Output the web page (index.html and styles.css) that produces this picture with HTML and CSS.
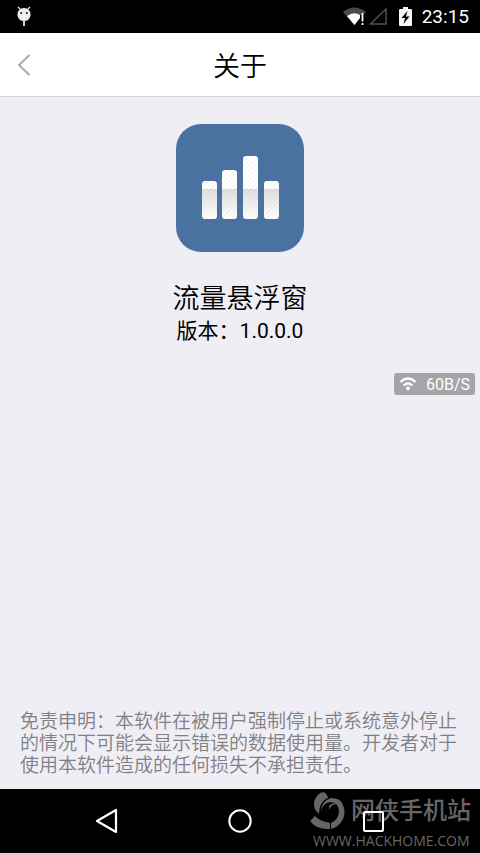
FILE: index.html
```html
<!DOCTYPE html>
<html lang="zh-CN">
<head>
<meta charset="utf-8">
<meta name="viewport" content="width=device-width, initial-scale=1">
<title>关于</title>
<link rel="stylesheet" href="styles.css">
</head>
<body>
<div class="status">
  <svg class="debug" width="16" height="22" viewBox="0 0 16 22" aria-hidden="true">
    <path d="M2 1l3 3M14 1l-3 3" stroke="#eee" stroke-width="1.2"/>
    <circle cx="8" cy="8.5" r="6.6" fill="#eee"/>
    <path d="M8 15v5" stroke="#eee" stroke-width="1.8"/>
    <circle cx="5.2" cy="7" r="1" fill="#111"/><circle cx="10.800" cy="7" r="1" fill="#111"/>
  </svg>
  <div class="indicators">
    <svg width="24" height="20" viewBox="0 0 24 20" aria-hidden="true">
      <path d="M1 5Q12-4 24 5L21 8H17V11L12 18Z" fill="#4b4b4b"/>
      <path d="M5 9Q12 4 18 8V11L12.500 18Z" fill="#fff"/>
      <path d="M20.500 6v8.500M20.500 16v2" stroke="#fff" stroke-width="1.800"/>
    </svg>
    <svg class="cell" width="19" height="20" viewBox="0 0 19 20" aria-hidden="true">
      <path d="M2.500 17H18V2Z" fill="none" stroke="#505050" stroke-width="1.500"/>
    </svg>
    <svg class="battery" width="13" height="20" viewBox="0 0 13 20" aria-hidden="true">
      <path d="M4 0h5v2h3q1 0 1 1v15q0 1-1 1H1q-1 0-1-1V3q0-1 1-1h3z" fill="#f4f4f4"/>
      <path d="M8.500 4L2.500 11H6L4.500 17L10.500 9.500H7z" fill="#000"/>
    </svg>
    <time>23:15</time>
  </div>
</div>
<header class="titlebar">
  <button class="back" aria-label="返回">
    <svg width="14" height="22" viewBox="0 0 14 22" aria-hidden="true"><path d="M12.500 1L2 11L12.500 21" fill="none" stroke="#aaa" stroke-width="2"/></svg>
  </button>
  <h1>关于</h1>
</header>
<main>
  <svg class="logo" width="128" height="128" viewBox="0 0 128 128" aria-hidden="true">
    <defs>
      <pattern id="hatch" width="5" height="5" patternUnits="userSpaceOnUse">
        <path d="M-1 6L6-1M-1 1L1-1M4 6L6 4" stroke="#888" stroke-opacity=".12" stroke-width="1"/>
      </pattern>
      <linearGradient id="shade" x1="0" y1="65" x2="0" y2="95" gradientUnits="userSpaceOnUse">
        <stop offset="0" stop-color="#dedede"/><stop offset="1" stop-color="#fff"/>
      </linearGradient>
      <clipPath id="bars">
        <rect x="26" y="57" width="15" height="38" rx="3"/><rect x="46" y="46" width="15" height="49" rx="3"/>
        <rect x="67" y="32" width="15" height="63" rx="3"/><rect x="88" y="57" width="15" height="38" rx="3"/>
      </clipPath>
    </defs>
    <rect width="128" height="128" rx="25" fill="#4a72a1"/>
    <g clip-path="url(#bars)">
      <path fill="#fff" d="M20 25h90v40H20z"/>
      <path fill="url(#shade)" d="M20 65h90v30H20z"/>
      <path fill="url(#hatch)" d="M20 25h90v70H20z"/>
    </g>
  </svg>
  <h2>流量悬浮窗</h2>
  <p class="version">版本：1.0.0.0</p>
  <p class="disclaimer">免责申明：本软件在被用户强制停止或系统意外停止的情况下可能会显示错误的数据使用量。开发者对于使用本软件造成的任何损失不承担责任。</p>
  <div class="speed">
    <svg width="18" height="14" viewBox="0 0 18 14" aria-hidden="true">
      <path d="M1.500 5Q9-2 16.500 5M4.500 8.500Q9 4.500 13.500 8.500" fill="none" stroke="#fff" stroke-width="2.300"/>
      <circle cx="9" cy="11.500" r="1.900" fill="#fff"/>
    </svg>
    <span>60B/S</span>
  </div>
</main>
<nav class="navbar">
  <button aria-label="后退"><svg width="26" height="26" viewBox="0 0 26 26" aria-hidden="true"><path d="M22 2V24L3 13Z" fill="none" stroke="#fff" stroke-width="2.200" stroke-linejoin="round"/></svg></button>
  <button aria-label="主页"><svg width="26" height="26" viewBox="0 0 26 26" aria-hidden="true"><circle cx="13" cy="13" r="10.700" fill="none" stroke="#fff" stroke-width="2"/></svg></button>
  <button aria-label="最近任务"><svg width="26" height="26" viewBox="0 0 26 26" aria-hidden="true"><rect x="4" y="4" width="19" height="19" rx="1" fill="none" stroke="#fff" stroke-width="2"/></svg></button>
  <div class="watermark">
    <div class="brand">
      <svg width="36" height="38" viewBox="0 0 36 38" aria-hidden="true">
        <g fill="#666">
          <path d="M12 0L17 6Q9 11 9 22Q3 17 4 10Q6 3 12 0Z"/>
          <path d="M13 0Q17 1 18 6L13 8Z"/>
          <path d="M5 24Q9 29 20 31V37Q7 38 0 29Z"/>
          <path d="M21 37V31Q28 28 29 20Q29 11 21 10Q13 10 11 20Q11 9 21 6Q31 6 33 13Q36 20 33 27Q29 35 21 37Z"/>
          <path d="M19 14Q22 10 27 12Q21 12 19 18Z"/>
        </g>
      </svg>
      <span>网侠手机站</span>
    </div>
    <div class="site">WWW.HACKHOME.COM</div>
  </div>
</nav>
</body>
</html>
```
FILE: styles.css
```css
* { box-sizing: border-box; }

body {
  margin: 0;
  min-height: 100vh;
  display: flex;
  flex-direction: column;
  background: #efeef5;
  color: #000;
  font-family: Roboto, "Noto Sans CJK SC", sans-serif;
}

svg { display: block; flex: none; }
h1, h2, p { margin: 0; font-weight: 400; }
h1, h2, .disclaimer { font-weight: 350; }

button {
  padding: 0;
  border: 0;
  background: none;
  display: grid;
  place-items: center;
}

.status {
  height: 33px;
  padding: 0 11px 0 16px;
  display: flex;
  align-items: center;
  justify-content: space-between;
  background: #000;
  color: #fff;
}

.indicators { display: flex; align-items: center; gap: 2px; }
.battery { margin: 0 8px 0 10px; }
.indicators time { padding-top: 1px; font-size: 19px; line-height: 24px; }

.titlebar {
  height: 64px;
  display: grid;
  grid-template-columns: 48px 1fr 48px;
  align-items: center;
  background: #fff;
  border-bottom: 1px solid #d6d6da;
}

.back { height: 48px; }
.titlebar h1 { padding-top: 4px; font-size: 27px; line-height: 40px; text-align: center; }

main {
  position: relative;
  flex: 1;
  padding: 27px 20px 12px;
  display: flex;
  flex-direction: column;
  align-items: center;
}

h2 { margin-top: 27px; font-size: 27px; line-height: 40px; }
.version { font-size: 21px; line-height: 24px; }

.disclaimer {
  width: 100%;
  margin-top: auto;
  color: #808083;
  font-size: 19px;
  line-height: 22px;
}

.speed {
  position: absolute;
  top: 276px;
  right: 5px;
  height: 22px;
  padding: 0 5px;
  display: flex;
  align-items: center;
  gap: 9px;
  border-radius: 3px;
  background: #a5a5a8;
  color: #fff;
  font-size: 16px;
}

.navbar {
  position: relative;
  z-index: 0;
  height: 64px;
  padding: 0 40px;
  display: grid;
  grid-template-columns: repeat(3, 1fr);
  background: #000;
}

.watermark {
  position: absolute;
  z-index: -1;
  right: 9px;
  bottom: 2px;
  color: #666;
  pointer-events: none;
}

.brand {
  display: flex;
  align-items: center;
  gap: 5px;
  font-size: 24px;
  line-height: 40px;
  font-weight: 500;
}

.site {
  margin-left: 3px;
  font-family: "Open Sans", sans-serif;
  font-size: 14px;
  line-height: 20px;
}
```
